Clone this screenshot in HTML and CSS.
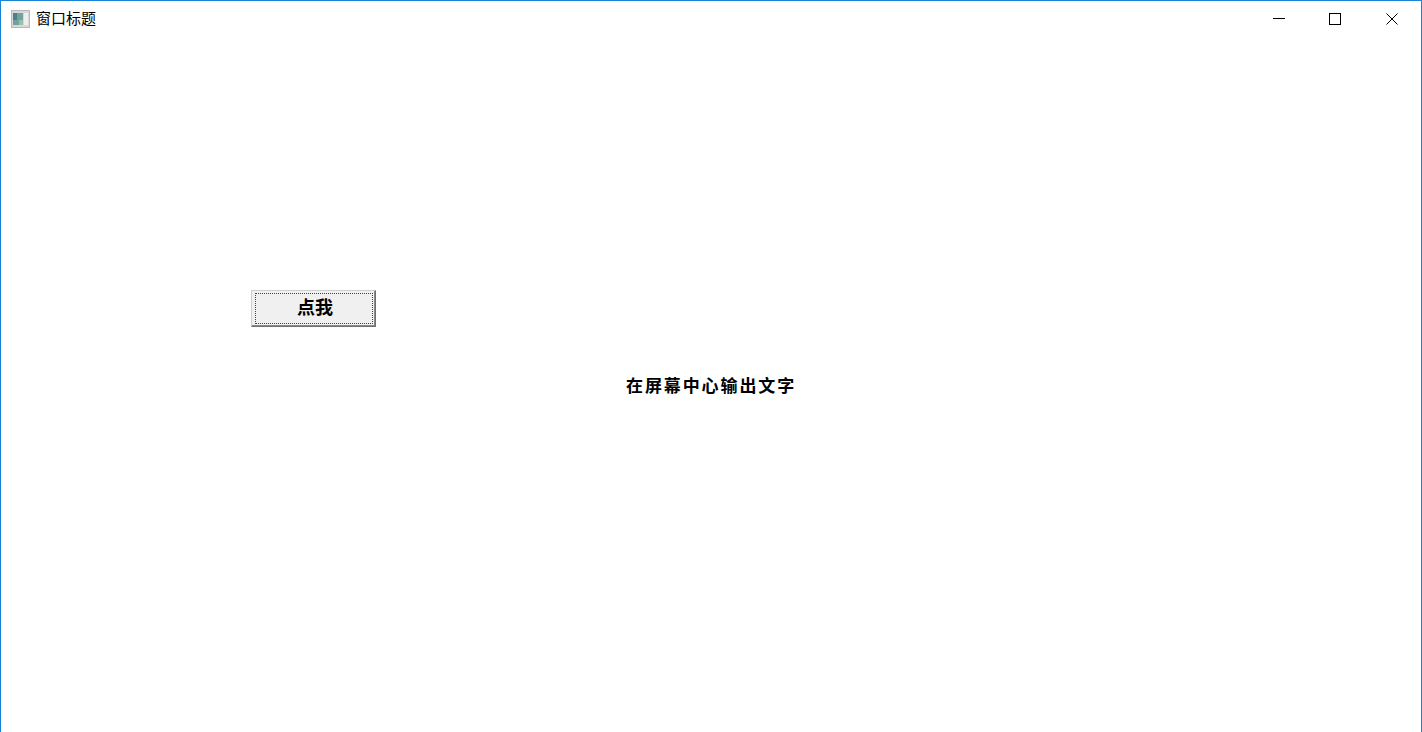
FILE: index.html
```html
<!DOCTYPE html>
<html lang="zh-CN">
  <head>
    <meta charset="UTF-8" />
    <title>窗口标题</title>
    <link rel="stylesheet" href="styles.css">
  </head>
  <body>
    <div class="window">
      <div class="title-bar">
        <svg class="app-icon" width="19" height="18" viewBox="0 0 19 18">
          <rect x="0.5" y="0.5" width="18" height="17" fill="#d8d8da" stroke="#b8b8bc" />
          <rect x="2" y="3" width="10" height="12" fill="#6fa39c" />
          <rect x="2" y="3" width="4" height="7" fill="#4d7f86" />
          <rect x="8" y="10" width="4" height="5" fill="#9cc0a8" />
          <rect x="13" y="3" width="4" height="12" fill="#eceef0" />
        </svg>
        <span class="title-text">窗口标题</span>
        <div class="controls">
          <button class="control control-min">
            <svg width="12" height="12" viewBox="0 0 12 12"><path d="M0 5.5H12" stroke="#000" fill="none" /></svg>
          </button>
          <button class="control">
            <svg width="12" height="12" viewBox="0 0 12 12"><rect x="0.5" y="0.5" width="11" height="11" stroke="#000" fill="none" /></svg>
          </button>
          <button class="control">
            <svg width="12" height="12" viewBox="0 0 12 12"><path d="M0.5 0.5L11.5 11.5M11.5 0.5L0.5 11.5" stroke="#000" fill="none" /></svg>
          </button>
        </div>
      </div>
      <div class="client">
        <button class="push-btn"><span class="focus-ring">点我</span></button>
        <div class="center-text">在屏幕中心输出文字</div>
      </div>
    </div>
  </body>
</html>
```

FILE: styles.css
```css
*,
*::after,
*::before {
  margin: 0;
  padding: 0;
  box-sizing: border-box;
}

html,
body {
  height: 100%;
  background: #fff;
}

body {
  font-family: "Noto Sans CJK SC", sans-serif;
  overflow: hidden;
}

.window {
  height: 100%;
  border: 1px solid #1883d7;
  border-bottom: 0;
  display: flex;
  flex-direction: column;
}

.title-bar {
  height: 36px;
  display: flex;
  align-items: center;
  padding-left: 10px;
}

.app-icon {
  margin-right: 6px;
}

.title-text {
  font-size: 15px;
  line-height: 20px;
  margin-bottom: 3px;
  color: #000;
}

.controls {
  margin-left: auto;
  display: flex;
  margin-right: 1px;
}

.control {
  width: 57px;
  height: 36px;
  border: 0;
  background: none;
  display: flex;
  align-items: center;
  justify-content: center;
}

.control-min {
  padding-left: 2px;
}

.client {
  flex: 1;
  padding: 253px 0 0 250px;
}

.push-btn {
  display: block;
  width: 125px;
  height: 37px;
  padding: 2px 2px 2px 3px;
  background: #f0f0f0;
  border: 1px solid;
  border-color: #cfcfcf #707070 #707070 #cfcfcf;
  box-shadow: inset -1px -1px 0 #8a8a8a;
  font-family: inherit;
  color: #000;
}

.focus-ring {
  display: block;
  height: 100%;
  border: 1px dotted #444;
  padding-left: 2px;
  font-size: 18px;
  font-weight: 700;
  line-height: 24px;
  text-align: center;
}

.center-text {
  margin: 45px 0 0 375px;
  font-size: 17px;
  font-weight: 700;
  letter-spacing: 1.9px;
  line-height: 25px;
  color: #000;
}
```
